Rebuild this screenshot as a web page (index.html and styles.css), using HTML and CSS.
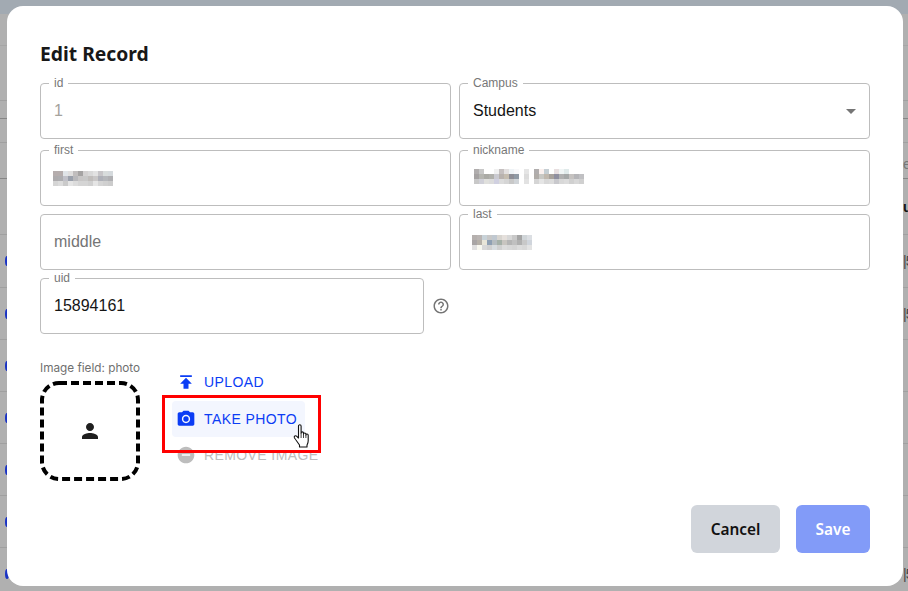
FILE: index.html
```html
<!DOCTYPE html>
<html lang="en">
<head>
<meta charset="utf-8">
<title>Edit Record</title>
<link rel="stylesheet" href="styles.css">
</head>
<body>
<div class="page">
  <div class="topbar"></div>
  <div class="bgrow h32"></div>
  <div class="bgrow h55"></div>
  <div class="bgrow h17"></div>
  <div class="bgrow h24"></div>
  <div class="bgrow h36 low"><span></span><span class="bgtext grey">e</span></div>
  <div class="bgrow h56"><span></span><span class="bgtext dark">ui</span></div>
  <div class="bgrow h53"><span class="dot"></span><span class="bgtext">|5</span></div>
  <div class="bgrow h52"><span class="dot"></span><span class="bgtext">|5</span></div>
  <div class="bgrow h52"><span class="dot"></span></div>
  <div class="bgrow h52"><span class="dot"></span></div>
  <div class="bgrow h52"><span class="dot"></span></div>
  <div class="bgrow h52"><span class="dot"></span></div>
  <div class="bgrow h52"><span class="dot"></span><span class="bgtext">|5</span></div>
</div>

<div class="dialog">
  <h1 class="title">Edit Record</h1>
  <div class="grid first">
    <div class="field"><label class="lbl">id</label><span class="val disabled">1</span></div>
    <div class="field"><label class="lbl">Campus</label><span class="val">Students</span>
      <svg class="caret" width="10" height="5" viewBox="0 0 10 5"><path d="M0 0h10L5 5z"/></svg>
    </div>
  </div>
  <div class="grid next second">
    <div class="field"><label class="lbl">first</label>
      <svg class="mosaic m-first" width="60" height="15" viewBox="0 0 12 3" shape-rendering="crispEdges">
        <rect x="0" y="0" width="1" height="1" fill="#b5adad"/><rect x="1" y="0" width="1" height="1" fill="#b5adad"/><rect x="2" y="0" width="1" height="1" fill="#e0e4e8"/><rect x="3" y="0" width="1" height="1" fill="#dfdede"/><rect x="4" y="0" width="1" height="1" fill="#c0bdbd"/><rect x="5" y="0" width="1" height="1" fill="#a5a3a3"/><rect x="6" y="0" width="1" height="1" fill="#d3d1d1"/><rect x="7" y="0" width="1" height="1" fill="#d9d9d9"/><rect x="8" y="0" width="1" height="1" fill="#e2e2e2"/><rect x="9" y="0" width="1" height="1" fill="#c7c5c8"/><rect x="10" y="0" width="1" height="1" fill="#d8dcdc"/><rect x="11" y="0" width="1" height="1" fill="#d5dadd"/>
        <rect x="0" y="1" width="1" height="1" fill="#adabad"/><rect x="1" y="1" width="1" height="1" fill="#adadb0"/><rect x="2" y="1" width="1" height="1" fill="#c0c0c8"/><rect x="3" y="1" width="1" height="1" fill="#9aa0ab"/><rect x="4" y="1" width="1" height="1" fill="#b8b8bb"/><rect x="5" y="1" width="1" height="1" fill="#c8c6c6"/><rect x="6" y="1" width="1" height="1" fill="#c8c8c8"/><rect x="7" y="1" width="1" height="1" fill="#c0bdbb"/><rect x="8" y="1" width="1" height="1" fill="#c9c7c7"/><rect x="9" y="1" width="1" height="1" fill="#aeb0b8"/><rect x="10" y="1" width="1" height="1" fill="#b5b7bb"/><rect x="11" y="1" width="1" height="1" fill="#b0b0b3"/>
        <rect x="0" y="2" width="1" height="1" fill="#d5d5d5"/><rect x="1" y="2" width="1" height="1" fill="#dcdcdc"/><rect x="2" y="2" width="1" height="1" fill="#cacaca"/><rect x="3" y="2" width="1" height="1" fill="#e5e5e5"/><rect x="4" y="2" width="1" height="1" fill="#dcdcdc"/><rect x="5" y="2" width="1" height="1" fill="#d5d5d5"/><rect x="6" y="2" width="1" height="1" fill="#d5d5d5"/><rect x="7" y="2" width="1" height="1" fill="#d0d0d0"/><rect x="8" y="2" width="1" height="1" fill="#e5e5e5"/><rect x="9" y="2" width="1" height="1" fill="#d5d5d5"/><rect x="10" y="2" width="1" height="1" fill="#d0d0d0"/><rect x="11" y="2" width="1" height="1" fill="#cccccc"/>
      </svg>
    </div>
    <div class="field"><label class="lbl">nickname</label>
      <svg class="mosaic m-nick" width="110" height="15" viewBox="0 0 22 3" shape-rendering="crispEdges">
        <rect x="0" y="0" width="1" height="1" fill="#b0adad"/><rect x="1" y="0" width="1" height="1" fill="#c8c8c8"/><rect x="4" y="0" width="1" height="1" fill="#f0f0f0"/><rect x="5" y="0" width="1" height="1" fill="#c5c0c0"/><rect x="6" y="0" width="1" height="1" fill="#e3e0e0"/><rect x="7" y="0" width="1" height="1" fill="#eef3f6"/><rect x="8" y="0" width="1" height="1" fill="#f8f8fa"/><rect x="10" y="0" width="1" height="1" fill="#e5e5e5"/><rect x="12" y="0" width="1" height="1" fill="#b0adad"/><rect x="13" y="0" width="1" height="1" fill="#faf0ee"/><rect x="14" y="0" width="1" height="1" fill="#c5ced3"/><rect x="16" y="0" width="1" height="1" fill="#e8dfe0"/><rect x="17" y="0" width="1" height="1" fill="#f0f5f5"/><rect x="18" y="0" width="1" height="1" fill="#e0eaea"/>
        <rect x="0" y="1" width="1" height="1" fill="#a5a2a2"/><rect x="1" y="1" width="1" height="1" fill="#b5b5b0"/><rect x="2" y="1" width="1" height="1" fill="#aaaaa5"/><rect x="3" y="1" width="1" height="1" fill="#b0b0ab"/><rect x="4" y="1" width="1" height="1" fill="#cacad0"/><rect x="5" y="1" width="1" height="1" fill="#b8b2ae"/><rect x="6" y="1" width="1" height="1" fill="#c5bdb0"/><rect x="7" y="1" width="1" height="1" fill="#8e8e96"/><rect x="8" y="1" width="1" height="1" fill="#909aa5"/><rect x="10" y="1" width="1" height="1" fill="#dcdcdc"/><rect x="12" y="1" width="1" height="1" fill="#b0aca8"/><rect x="13" y="1" width="1" height="1" fill="#c8c8c4"/><rect x="14" y="1" width="1" height="1" fill="#c0b8ae"/><rect x="15" y="1" width="1" height="1" fill="#a8a29c"/><rect x="16" y="1" width="1" height="1" fill="#8f8f9f"/><rect x="17" y="1" width="1" height="1" fill="#b0b0b0"/><rect x="18" y="1" width="1" height="1" fill="#a5a8a8"/><rect x="19" y="1" width="1" height="1" fill="#c5c2c0"/><rect x="20" y="1" width="1" height="1" fill="#b5b5b8"/><rect x="21" y="1" width="1" height="1" fill="#c0c0c3"/>
        <rect x="0" y="2" width="1" height="1" fill="#c8c8c8"/><rect x="1" y="2" width="1" height="1" fill="#d0d0d8"/><rect x="2" y="2" width="1" height="1" fill="#e0e0dd"/><rect x="3" y="2" width="1" height="1" fill="#dcdcdc"/><rect x="4" y="2" width="1" height="1" fill="#d0d0e0"/><rect x="5" y="2" width="1" height="1" fill="#dcdcdc"/><rect x="6" y="2" width="1" height="1" fill="#d5d5d5"/><rect x="7" y="2" width="1" height="1" fill="#c8c8c8"/><rect x="8" y="2" width="1" height="1" fill="#d0d4d8"/><rect x="10" y="2" width="1" height="1" fill="#e2e2e2"/><rect x="12" y="2" width="1" height="1" fill="#d5d5d5"/><rect x="13" y="2" width="1" height="1" fill="#e5e5e5"/><rect x="14" y="2" width="1" height="1" fill="#d8d8d8"/><rect x="15" y="2" width="1" height="1" fill="#dcdcdc"/><rect x="16" y="2" width="1" height="1" fill="#c8c8cc"/><rect x="17" y="2" width="1" height="1" fill="#d8d8d8"/><rect x="18" y="2" width="1" height="1" fill="#dcdcdc"/><rect x="19" y="2" width="1" height="1" fill="#d0d0d0"/><rect x="20" y="2" width="1" height="1" fill="#d8d8d8"/><rect x="21" y="2" width="1" height="1" fill="#d0d0d0"/>
      </svg>
    </div>
  </div>
  <div class="grid next">
    <div class="field"><span class="val muted">middle</span></div>
    <div class="field"><label class="lbl">last</label>
      <svg class="mosaic m-last" width="60" height="15" viewBox="0 0 12 3" shape-rendering="crispEdges">
        <rect x="0" y="0" width="1" height="1" fill="#b5b0ae"/><rect x="1" y="0" width="1" height="1" fill="#bab5b3"/><rect x="2" y="0" width="1" height="1" fill="#c8d2d8"/><rect x="3" y="0" width="1" height="1" fill="#c8c8c8"/><rect x="4" y="0" width="1" height="1" fill="#c0c8d0"/><rect x="5" y="0" width="1" height="1" fill="#d8d5d0"/><rect x="6" y="0" width="1" height="1" fill="#e5e0dc"/><rect x="7" y="0" width="1" height="1" fill="#d8d8d8"/><rect x="8" y="0" width="1" height="1" fill="#c8c8c8"/><rect x="9" y="0" width="1" height="1" fill="#a5a5a5"/><rect x="10" y="0" width="1" height="1" fill="#d0d5d8"/><rect x="11" y="0" width="1" height="1" fill="#dcdfe3"/>
        <rect x="0" y="1" width="1" height="1" fill="#a8a5a5"/><rect x="1" y="1" width="1" height="1" fill="#b5b0a8"/><rect x="2" y="1" width="1" height="1" fill="#e8e5d8"/><rect x="3" y="1" width="1" height="1" fill="#8fa0b3"/><rect x="4" y="1" width="1" height="1" fill="#b5bcc0"/><rect x="5" y="1" width="1" height="1" fill="#a5b0a8"/><rect x="6" y="1" width="1" height="1" fill="#c8c5c0"/><rect x="7" y="1" width="1" height="1" fill="#b5b5b5"/><rect x="8" y="1" width="1" height="1" fill="#c0c0c0"/><rect x="9" y="1" width="1" height="1" fill="#b0b0b0"/><rect x="10" y="1" width="1" height="1" fill="#c8c8c8"/><rect x="11" y="1" width="1" height="1" fill="#d0d5dc"/>
        <rect x="0" y="2" width="1" height="1" fill="#e0e0e0"/><rect x="1" y="2" width="1" height="1" fill="#f8f8f0"/><rect x="2" y="2" width="1" height="1" fill="#d8d8d8"/><rect x="3" y="2" width="1" height="1" fill="#d0d0d0"/><rect x="4" y="2" width="1" height="1" fill="#d8dde0"/><rect x="5" y="2" width="1" height="1" fill="#d0d0d0"/><rect x="6" y="2" width="1" height="1" fill="#dcdcdc"/><rect x="7" y="2" width="1" height="1" fill="#d8d8d8"/><rect x="8" y="2" width="1" height="1" fill="#d5d5d5"/><rect x="9" y="2" width="1" height="1" fill="#dcdcdc"/><rect x="10" y="2" width="1" height="1" fill="#d8d8d8"/><rect x="11" y="2" width="1" height="1" fill="#e3e3e3"/>
      </svg>
    </div>
  </div>
  <div class="uidrow">
    <div class="field uid"><label class="lbl">uid</label><span class="val">15894161</span></div>
    <svg class="help" width="18" height="18" viewBox="0 0 24 24"><path d="M11 18h2v-2h-2v2zm1-16C6.48 2 2 6.48 2 12s4.48 10 10 10 10-4.48 10-10S17.52 2 12 2zm0 18c-4.41 0-8-3.59-8-8s3.59-8 8-8 8 3.59 8 8-3.59 8-8 8zm0-14c-2.21 0-4 1.79-4 4h2c0-1.1.9-2 2-2s2 .9 2 2c0 2-3 1.75-3 5h2c0-2.25 3-2.5 3-5 0-2.21-1.79-4-4-4z"/></svg>
  </div>
  <div class="imgsec">
    <div class="imgcol">
      <div class="imglabel">Image field: photo</div>
      <div class="imgbox">
        <svg class="dash" width="100" height="100" viewBox="0 0 100 100"><rect x="2" y="2" width="96" height="96" rx="17" ry="17"/></svg>
        <svg class="person" width="24" height="24" viewBox="0 0 24 24"><path d="M12 12c2.21 0 4-1.79 4-4s-1.79-4-4-4-4 1.79-4 4 1.79 4 4 4zm0 2c-2.67 0-8 1.34-8 4v2h16v-2c0-2.66-5.33-4-8-4z"/></svg>
      </div>
    </div>
    <div class="imgactions">
      <div class="act first-act"><svg class="ico" width="20" height="20" viewBox="0 0 24 24"><path d="M5 4v2h14V4H5zm0 10h4v6h6v-6h4l-7-7-7 7z"/></svg><span>UPLOAD</span></div>
      <div class="act hover"><svg class="ico" width="20" height="20" viewBox="0 0 24 24"><path d="M9 2 7.170 4H4c-1.100 0-2 .9-2 2v12c0 1.100.9 2 2 2h16c1.100 0 2-.9 2-2V6c0-1.100-.9-2-2-2h-3.170L15 2H9zm3 15c-2.760 0-5-2.240-5-5s2.240-5 5-5 5 2.240 5 5-2.240 5-5 5z"/><circle cx="12" cy="12" r="3.2"/></svg><span>TAKE PHOTO</span></div>
      <div class="act off"><svg class="ico" width="20" height="20" viewBox="0 0 24 24"><path d="M12 2C6.480 2 2 6.480 2 12s4.480 10 10 10 10-4.480 10-10S17.520 2 12 2zm5 11H7v-2h10v2z"/></svg><span>REMOVE IMAGE</span></div>
      <div class="redbox"></div>
      <svg class="hand" width="18" height="27" viewBox="0 0 18 26"><path d="M5.500 2.500c0-1.600 2.600-1.600 2.600 0v7c0-1.500 2.400-1.500 2.400 0v1c0-1.400 2.400-1.400 2.400 0v1c0-1.300 2.300-1.300 2.300.2v5.600c0 2-.6 3-1.200 4.200v2H6.500v-2C5 19.500 3 16.500 1.500 14.500c-1-1.600 1-3 2.300-1.700l1.700 1.700z"/><path class="fingers" d="M8.100 9.500v5M10.500 10.500v4M12.900 11.500v3"/></svg>
    </div>
  </div>
  <div class="footer">
    <button class="btn cancel">Cancel</button>
    <button class="btn save">Save</button>
  </div>
</div>
</body>
</html>
```

FILE: styles.css
```css
* { box-sizing: border-box; }
html, body { margin: 0; padding: 0; height: 100%; overflow: hidden; }
body { background: #b0b0b0; font-family: "Liberation Sans", Arial, sans-serif; }

.page { display: flex; flex-direction: column; height: 591px; overflow: hidden; }
.topbar { height: 14px; background: #a2aab2; flex: none; }
.bgrow { flex: none; border-bottom: 1px solid #9b9b9b; display: flex; justify-content: space-between; align-items: center; padding: 0 0 0 5px; font-size: 14px; color: #333; }
.h32 { height: 32px; border-bottom-color: #a6a6a6; }
.h55 { height: 55px; border-bottom-color: #a0a0a0; }
.h17 { height: 18px; border-bottom-color: #868686; }
.h24 { height: 24px; border-bottom-color: #a0a0a0; }
.h36 { height: 36px; border-bottom-color: #868686; }
.low { padding-top: 6px; }
.h56 { height: 56px; border-bottom-color: #a0a0a0; }
.h53 { height: 53px; border-bottom-color: #a0a0a0; }
.h52 { height: 52px; border-bottom-color: #a0a0a0; }
.dot { width: 4px; height: 10px; background: #1a33c4; border-radius: 50%; }
.bgtext { width: 5px; overflow: hidden; white-space: nowrap; flex: none; letter-spacing: -1px; color: #444; }
.bgtext.grey { color: #777; }
.bgtext.dark { color: #111; font-weight: 700; letter-spacing: 0; }

.dialog {
  position: absolute; left: 7px; top: 6px; width: 896px; height: 580px;
  background: #fff; border-radius: 16px;
  padding: 32px 33px 33px;
  display: flex; flex-direction: column;
}
.title {
  margin: 0 0 13px; font: 700 19.3px/32px "Noto Sans", sans-serif; color: #181818;
}
.grid { display: grid; grid-template-columns: 411px 411px; column-gap: 8px; }
.next { margin-top: 8px; }
.second { margin-top: 11px; }
.field {
  position: relative; height: 56px; border: 1px solid #bdbdbd; border-radius: 4px;
  padding: 0 13px; display: flex; align-items: center;
}
.lbl {
  position: absolute; left: 8px; top: -8px; padding: 0 5px; background: #fff;
  font-size: 12px; line-height: 14px; color: #777;
}
.val { font-size: 16px; color: #151515; }
.val.disabled { color: #a5a39d; }
.val.muted { color: #757575; }
.caret { position: absolute; right: 13px; top: 25px; fill: #757575; }
.mosaic { display: block; }
.m-first { margin-left: -1px; margin-top: 1px; }
.m-nick { margin-left: 1px; margin-top: -3px; }
.m-last { margin-left: -1px; margin-top: 1px; }

.uidrow { display: flex; align-items: center; margin-top: 8px; gap: 8px; }
.uid { width: 384px; }
.help { fill: #757575; flex: none; }

.imgsec { display: flex; margin-top: 26px; }
.imgcol { width: 122px; flex: none; }
.imglabel { font: 11.75px/16px "Inter", sans-serif; color: #6f6f6f; white-space: nowrap; margin-bottom: 5px; }
.imgbox { position: relative; width: 100px; height: 100px; display: flex; align-items: center; justify-content: center; }
.dash { position: absolute; left: 0; top: 0; fill: none; stroke: #000; stroke-width: 4; stroke-dasharray: 8 4; }
.person { fill: #1f1f1f; }

.imgactions { position: relative; display: flex; flex-direction: column; margin-top: 4px; margin-left: 10px; width: 160px; }
.act {
  height: 36px; display: flex; align-items: center; gap: 8px; padding: 0 8px 0 4px;
  font: 14px/20px "Liberation Sans", sans-serif; letter-spacing: .4px; color: #0b3df5; border-radius: 4px;
  white-space: nowrap; width: max-content;
}
.first-act { margin-bottom: 1px; }
.ico { fill: #0b3df5; flex: none; }
.act.hover { background: #f3f6fe; }
.act.off { color: #bdbdbd; }
.act.off .ico { fill: #bdbdbd; }
.redbox { position: absolute; left: -10px; top: 31px; width: 159px; height: 58px; border: 3px solid #f00; }
.hand { position: absolute; left: 121px; top: 59px; fill: #fff; stroke: #111; stroke-width: 1.1; stroke-linejoin: round; }
.fingers { fill: none; stroke: #111; stroke-width: .8; }

.footer { margin-top: auto; display: flex; justify-content: flex-end; gap: 16px; }
.btn {
  height: 48px; border: 0; border-radius: 6px; font: 600 15.4px "Noto Sans", sans-serif; padding: 0;
}
.cancel { background: #d1d5db; color: #111; width: 89px; }
.save { background: #829bf8; color: #fff; width: 74px; }
```
